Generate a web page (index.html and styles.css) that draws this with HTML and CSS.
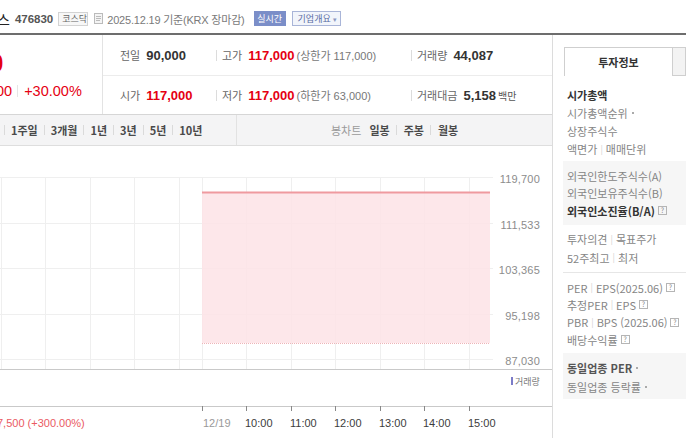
FILE: index.html
```html
<!DOCTYPE html>
<html lang="ko">
<head>
<meta charset="utf-8">
<title>시세</title>
<link rel="stylesheet" href="styles.css">
</head>
<body>
<div class="top">
  <span class="name">스</span>
  <span class="code">476830</span>
  <span class="badge market">코스닥</span>
  <svg class="doc" width="9" height="11" viewBox="0 0 9 11"><rect x="0.5" y="0.5" width="8" height="10" fill="#f4f4f4" stroke="#bbb"/><line x1="2" y1="3.5" x2="7" y2="3.5" stroke="#bbb"/><line x1="2" y1="5.5" x2="7" y2="5.5" stroke="#bbb"/><line x1="2" y1="7.5" x2="6" y2="7.5" stroke="#bbb"/></svg>
  <span class="date">2025.12.19 기준(KRX 장마감)</span>
  <span class="badge live">실시간</span>
  <span class="badge info">기업개요 <i class="caret">▾</i></span>
</div>
<div class="main">
  <div class="content">
    <div class="quote">
      <div class="pricebox">
        <div class="now">0</div>
        <div class="change"><span class="chg">00</span><span class="rate">+30.00%</span></div>
      </div>
      <div class="stats">
        <div class="row r1">
          <div class="cell c1"><span class="lbl">전일</span><span class="val">90,000</span></div>
          <div class="cell c2 sep"><span class="lbl">고가</span><span class="val up">117,000</span><span class="sub">(상한가 117,000)</span></div>
          <div class="cell c3 sep"><span class="lbl">거래량</span><span class="val">44,087</span></div>
        </div>
        <div class="row r2">
          <div class="cell c1"><span class="lbl">시가</span><span class="val up">117,000</span></div>
          <div class="cell c2 sep"><span class="lbl">저가</span><span class="val up">117,000</span><span class="sub">(하한가 63,000)</span></div>
          <div class="cell c3 sep"><span class="lbl">거래대금</span><span class="val">5,158</span><span class="unit">백만</span></div>
        </div>
      </div>
    </div>
    <div class="toolbar">
      <div class="periods">
        <span class="tb">1주일</span><span class="tb">3개월</span><span class="tb">1년</span><span class="tb">3년</span><span class="tb">5년</span><span class="tb">10년</span>
      </div>
      <div class="kinds">
        <span class="kb muted">봉차트</span><span class="kb">일봉</span><span class="kb sepd">주봉</span><span class="kb sepd">월봉</span>
      </div>
    </div>
    <svg class="chart" width="552" height="292" viewBox="0 0 552 292">
      <g stroke="#efefef" stroke-width="1">
        <line x1="0" y1="31.5" x2="493" y2="31.5"/>
        <line x1="0" y1="77.5" x2="493" y2="77.5"/>
        <line x1="0" y1="122.5" x2="493" y2="122.5"/>
        <line x1="0" y1="168.5" x2="493" y2="168.5"/>
        <line x1="0" y1="213.5" x2="493" y2="213.5"/>
        <line x1="1.5" y1="31" x2="1.5" y2="223"/>
        <line x1="45.5" y1="31" x2="45.5" y2="223"/>
        <line x1="90.5" y1="31" x2="90.5" y2="223"/>
        <line x1="134.5" y1="31" x2="134.5" y2="223"/>
        <line x1="179.5" y1="31" x2="179.5" y2="223"/>
        <line x1="202.5" y1="31" x2="202.5" y2="223"/>
        <line x1="246.5" y1="31" x2="246.5" y2="223"/>
        <line x1="291.5" y1="31" x2="291.5" y2="223"/>
        <line x1="335.5" y1="31" x2="335.5" y2="223"/>
        <line x1="380.5" y1="31" x2="380.5" y2="223"/>
        <line x1="424.5" y1="31" x2="424.5" y2="223"/>
        <line x1="469.5" y1="31" x2="469.5" y2="223"/>
      </g>
      <rect x="202" y="46" width="288" height="151" fill="#fde3e6" fill-opacity="0.85"/>
      <line x1="202" y1="46.5" x2="490" y2="46.5" stroke="#ef9a9f" stroke-width="2"/>
      <line x1="202" y1="197.5" x2="490" y2="197.5" stroke="#eeb4b8" stroke-dasharray="1 1"/>
      <line x1="0" y1="223.5" x2="552" y2="223.5" stroke="#c9c9c9"/>
      <line x1="0" y1="260.5" x2="552" y2="260.5" stroke="#c9c9c9"/>
      <g class="ylab" text-anchor="end">
        <text x="540" y="37">119,700</text>
        <text x="540" y="83">111,533</text>
        <text x="540" y="128">103,365</text>
        <text x="540" y="174">95,198</text>
        <text x="540" y="219">87,030</text>
      </g>
      <rect x="511" y="231" width="2" height="8" fill="#7c7cc8"/>
      <text class="vlab" x="515" y="239">거래량</text>
      <g stroke="#888">
        <line x1="202.5" y1="260" x2="202.5" y2="265"/>
        <line x1="246.5" y1="260" x2="246.5" y2="265"/>
        <line x1="291.5" y1="260" x2="291.5" y2="265"/>
        <line x1="335.5" y1="260" x2="335.5" y2="265"/>
        <line x1="380.5" y1="260" x2="380.5" y2="265"/>
        <line x1="424.5" y1="260" x2="424.5" y2="265"/>
        <line x1="469.5" y1="260" x2="469.5" y2="265"/>
      </g>
      <text class="xlab dim" x="203" y="281">12/19</text>
      <text class="xlab" x="245" y="281">10:00</text>
      <text class="xlab" x="290" y="281">11:00</text>
      <text class="xlab" x="334" y="281">12:00</text>
      <text class="xlab" x="379" y="281">13:00</text>
      <text class="xlab" x="423" y="281">14:00</text>
      <text class="xlab" x="468" y="281">15:00</text>
      <text class="lowlab" x="-3" y="281">7,500 (+300.00%)</text>
    </svg>
  </div>
  <div class="side">
    <div class="tabs">
      <div class="tab active">투자정보</div>
      <div class="tab rest"></div>
    </div>
    <div class="blk b1">
      <div class="it strong">시가총액</div>
      <div class="it">시가총액순위<i class="dot"></i></div>
      <div class="it">상장주식수</div>
      <div class="it">액면가<i class="bar">|</i>매매단위</div>
    </div>
    <div class="blk gray b2">
      <div class="it">외국인한도주식수(A)</div>
      <div class="it">외국인보유주식수(B)</div>
      <div class="it strong">외국인소진율(B/A)<i class="q">?</i></div>
    </div>
    <div class="blk b3">
      <div class="it">투자의견<i class="bar">|</i>목표주가</div>
      <div class="it">52주최고<i class="bar">|</i>최저</div>
    </div>
    <div class="blk b4">
      <div class="it">PER<i class="bar">|</i>EPS(2025.06)<i class="q">?</i></div>
      <div class="it">추정PER<i class="bar">|</i>EPS<i class="q">?</i></div>
      <div class="it">PBR<i class="bar">|</i>BPS (2025.06)<i class="q">?</i></div>
      <div class="it">배당수익률<i class="q">?</i></div>
    </div>
    <div class="blk gray b5">
      <div class="it semi">동일업종 PER<i class="dot"></i></div>
      <div class="it">동일업종 등락률<i class="dot"></i></div>
    </div>
  </div>
</div>
</body>
</html>
```

FILE: styles.css
```css
html, body {
  margin: 0;
  padding: 0;
}
body {
  width: 686px;
  height: 440px;
  overflow: hidden;
  background: #fff;
  font-family: "Liberation Sans", "Noto Sans CJK KR", sans-serif;
  color: #555;
}

/* top line */
.top {
  height: 35px;
  box-sizing: border-box;
  padding-top: 4px;
  display: flex;
  align-items: center;
  border-bottom: 2px solid #6d6d6d;
  white-space: nowrap;
  font-size: 11px;
}
.name {
  font-family: "Noto Sans CJK KR", sans-serif;
  font-size: 14px;
  color: #222;
  margin-left: -3px;
}
.code {
  margin-left: 5px;
  font-size: 11.5px;
  font-weight: bold;
  color: #555;
}
.badge {
  display: inline-block;
  height: 14px;
  line-height: 14px;
  box-sizing: border-box;
  font-family: "Noto Sans CJK KR", sans-serif;
  font-size: 9px;
  padding: 0 3px;
}
.market {
  margin-left: 5px;
  border: 1px solid #d3d3d3;
  background: #f7f7f7;
  color: #666;
  line-height: 12px;
  width: 30px;
  text-align: center;
}
.doc {
  margin-left: 6px;
}
.date {
  margin-left: 4px;
  font-family: "Liberation Sans", "Noto Sans CJK KR", sans-serif;
  font-size: 11px;
  letter-spacing: -0.2px;
  color: #7a7a7a;
}
.live {
  margin-left: 9px;
  width: 32px;
  text-align: center;
  background: #7b8ec8;
  color: #fff;
  height: 15px;
  line-height: 15px;
}
.info {
  margin-left: 6px;
  width: 49px;
  border: 1px solid #a9b5d8;
  background: #f2f5fb;
  color: #5a6ca3;
  height: 15px;
  line-height: 13px;
  padding: 0 0 0 5px;
}
.caret {
  font-style: normal;
  font-size: 7px;
  color: #8b98c2;
}

/* main */
.main {
  display: flex;
  height: 403px;
}
.content {
  width: 552px;
  border-right: 1px solid #dcdcdc;
  flex: none;
}

/* quote */
.quote {
  display: flex;
  height: 79px;
  border-bottom: 1px solid #d6d6d6;
}
.pricebox {
  width: 102px;
  border-right: 1px solid #e3e3e3;
  flex: none;
  padding-top: 13px;
  color: #e50012;
  white-space: nowrap;
  overflow: hidden;
}
.now {
  font-size: 26px;
  font-weight: bold;
  line-height: 30px;
  margin-left: -11px;
}
.change {
  margin-top: 4px;
  display: flex;
  align-items: center;
  font-size: 14.5px;
  line-height: 18px;
}
.chg {
  margin-left: -4px;
}
.rate {
  margin-left: 11px;
  display: flex;
  align-items: center;
}
.rate::before {
  content: "";
  width: 1px;
  height: 12px;
  background: #e5e5e5;
  margin-right: 6px;
  margin-left: -6px;
}
.stats {
  flex: 1;
  display: flex;
  flex-direction: column;
}
.row {
  display: flex;
  align-items: center;
  white-space: nowrap;
}
.r1 {
  height: 40px;
  border-bottom: 1px solid #ececec;
}
.r2 {
  height: 38px;
}
.cell {
  display: flex;
  align-items: center;
  height: 100%;
}
.c1 {
  width: 96px;
  padding-left: 17px;
}
.c2 {
  width: 195px;
}
.c3 {
  flex: 1;
}
.sep::before {
  content: "";
  width: 1px;
  height: 11px;
  background: #dcdcdc;
  margin-right: 5px;
}
.lbl {
  font-family: "Noto Sans CJK KR", sans-serif;
  font-size: 11px;
  color: #666;
  margin-right: 6px;
}
.val {
  font-size: 13px;
  font-weight: bold;
  color: #333;
}
.val.up {
  color: #e50012;
}
.sub {
  font-size: 11px;
  color: #777;
  margin-left: 2px;
}
.unit {
  font-family: "Noto Sans CJK KR", sans-serif;
  font-size: 10px;
  color: #555;
  margin-left: 2px;
}

/* toolbar */
.toolbar {
  height: 30px;
  background: #f4f4f5;
  border-bottom: 1px solid #dedede;
  display: flex;
  font-family: "Noto Sans CJK KR", sans-serif;
  font-size: 11px;
  white-space: nowrap;
}
.periods {
  width: 236px;
  display: flex;
  align-items: center;
  padding-left: 4px;
  box-sizing: border-box;
}
.tb {
  display: flex;
  align-items: center;
  font-weight: bold;
  color: #4a4a4a;
  padding-right: 6px;
}
.tb::before {
  content: "";
  width: 1px;
  height: 10px;
  background: #dadada;
  margin-right: 6px;
}
.kinds {
  flex: 1;
  display: flex;
  align-items: center;
  border-left: 1px solid #e2e2e2;
  padding-left: 94px;
}
.kb {
  display: flex;
  align-items: center;
  font-weight: bold;
  color: #4a4a4a;
}
.kb.muted {
  font-weight: normal;
  color: #9a9a9a;
  margin-right: 8px;
}
.kb.sepd::before {
  content: "";
  width: 1px;
  height: 10px;
  background: #dadada;
  margin: 0 7px 0 6px;
}
.chart {
  display: block;
}
.ylab text {
  font-family: "Liberation Sans", sans-serif;
  font-size: 11px;
  fill: #8c8c8c;
  letter-spacing: 0.2px;
}
.vlab {
  font-family: "Noto Sans CJK KR", sans-serif;
  font-size: 9px;
  fill: #777;
}
.xlab {
  font-family: "Liberation Sans", sans-serif;
  font-size: 11px;
  fill: #3c3c3c;
}
.xlab.dim {
  fill: #999;
}
.lowlab {
  font-family: "Liberation Sans", sans-serif;
  font-size: 11px;
  fill: #ea5a63;
}

/* side */
.side {
  flex: 1;
  padding-top: 12px;
  font-family: "Noto Sans CJK KR", "Liberation Sans", sans-serif;
  font-size: 11px;
  color: #858585;
  white-space: nowrap;
  overflow: hidden;
}
.tabs {
  display: flex;
  height: 29px;
  padding-left: 11px;
}
.tab {
  box-sizing: border-box;
  height: 29px;
  border: 1px solid #cfcfcf;
}
.tab.active {
  width: 109px;
  border-bottom: none;
  background: #fff;
  text-align: center;
  line-height: 28px;
  font-weight: bold;
  color: #333;
}
.tab.rest {
  flex: 1;
  border-left: none;
  background: #f3f3f3;
}
.blk {
  margin-left: 10px;
  padding-left: 4px;
}
.it {
  display: flex;
  align-items: center;
}
.strong {
  font-weight: bold;
  color: #333;
}
.semi {
  font-weight: bold;
  color: #555;
}
.gray {
  background: #f6f6f6;
}
.b1 {
  padding-top: 10px;
  padding-bottom: 3px;
}
.b1 .it {
  height: 18px;
}
.b2 {
  padding-top: 6px;
  padding-bottom: 5.5px;
}
.b2 .it {
  height: 17.5px;
}
.b3 {
  padding-top: 5px;
  padding-bottom: 5px;
  border-bottom: 1px solid #e6e6e6;
}
.b3 .it {
  height: 18.5px;
}
.b4 {
  padding-top: 6px;
  padding-bottom: 5px;
}
.b4 .it {
  height: 17.3px;
}
.b5 {
  padding-top: 5px;
  padding-bottom: 3px;
}
.b5 .it {
  height: 19px;
}
.bar {
  font-style: normal;
  color: #d2d2d2;
  font-size: 9px;
  margin: 0 3px;
}
.dot {
  width: 2px;
  height: 2px;
  background: #aaa;
  margin-left: 4px;
}
.q {
  display: inline-flex;
  align-items: center;
  justify-content: center;
  width: 9px;
  height: 9px;
  box-sizing: border-box;
  border: 1px solid #b5b5b5;
  font-style: normal;
  font-weight: normal;
  font-size: 7px;
  line-height: 7px;
  color: #888;
  margin-left: 3px;
}
```
